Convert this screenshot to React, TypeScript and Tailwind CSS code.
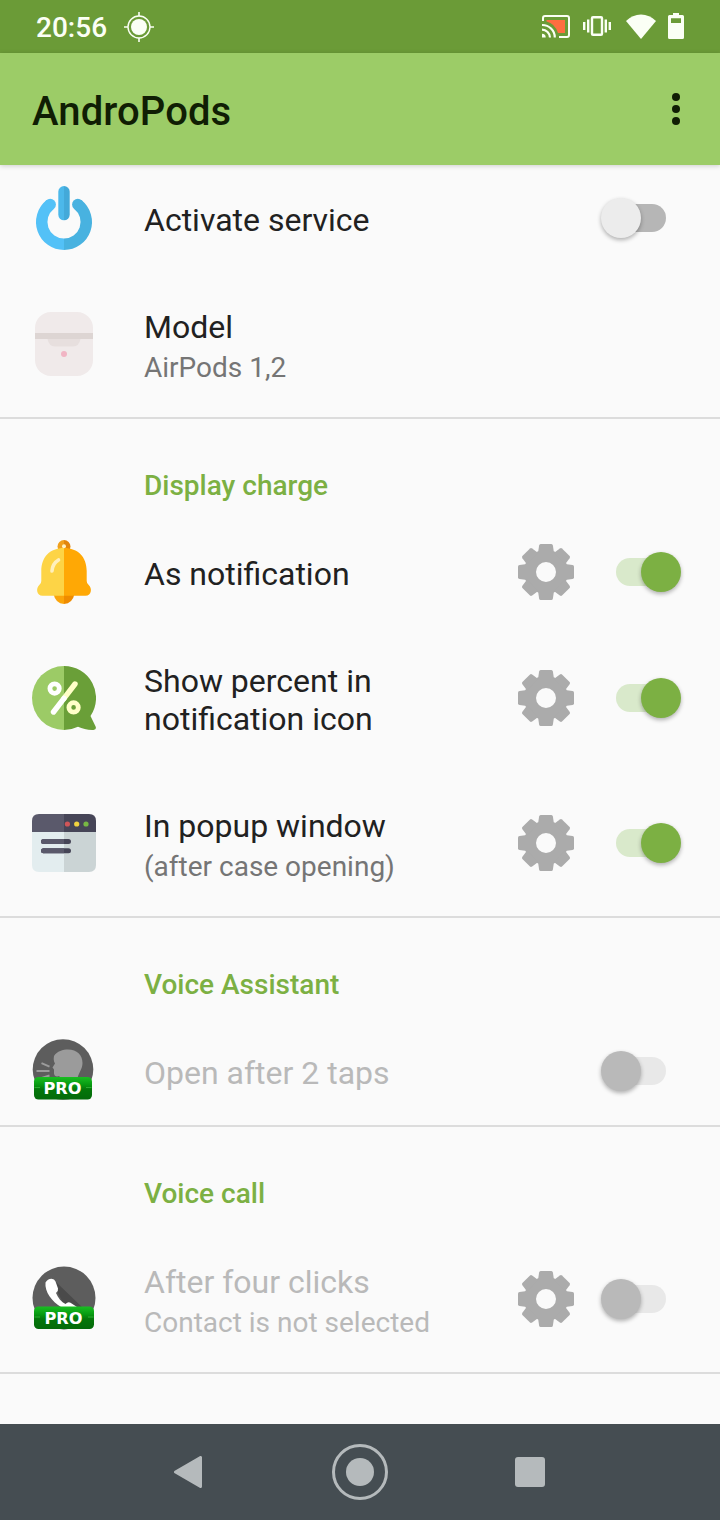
import type { ReactNode } from "react";

type SwitchState = "off" | "on" | "disabled";

interface RowProps {
  icon: ReactNode;
  title: string;
  subtitle?: string;
  state?: SwitchState;
  gear?: boolean;
  tall?: boolean;
}

function Toggle({ state }: { state: SwitchState }) {
  const track =
    state === "on" ? "bg-[#d9e9cb]" : state === "off" ? "bg-[#b6b6b6]" : "bg-[#e8e8e8]";
  const thumb =
    state === "on" ? "bg-[#7cb043]" : state === "off" ? "bg-[#ececec]" : "bg-[#b9b9b9]";
  return (
    <div className="relative flex h-10 w-20 shrink-0 items-center px-[15px]">
      <div className={`h-7 w-full rounded-full ${track}`} />
      <div
        className={`absolute top-0 size-10 rounded-full shadow-[0_2px_4px_rgba(0,0,0,0.3)] ${thumb} ${
          state === "on" ? "right-0" : "left-0"
        }`}
      />
    </div>
  );
}

function GearIcon() {
  return (
    <svg viewBox="0 0 56 56" className="size-14 shrink-0">
      <circle cx="28" cy="28" r="16" fill="none" stroke="#ababab" strokeWidth="12" />
      {[0, 45, 90, 135, 180, 225, 270, 315].map((a) => (
        <path
          key={a}
          d="M20 9L21.1 1.5Q21.4 0 22.6 0H33.4Q34.6 0 34.9 1.5L36 9Z"
          fill="#ababab"
          transform={`rotate(${a} 28 28)`}
        />
      ))}
    </svg>
  );
}

function Row({ icon, title, subtitle, state, gear, tall }: RowProps) {
  const disabled = state === "disabled";
  return (
    <div className={`flex items-center pr-[39px] pl-8 ${tall ? "h-[145px] pb-px" : "h-[108px]"}`}>
      <div className="size-16 shrink-0">{icon}</div>
      <div className="ml-12 min-w-0 flex-1 pt-1 whitespace-pre-line">
        <p
          className={`text-[32px] leading-[38px] ${disabled ? "text-[#b9b9b9]" : "text-[#212121]"}`}
        >
          {title}
        </p>
        {subtitle && (
          <p
            className={`pt-[5px] text-[28px] leading-[33px] whitespace-nowrap ${
              disabled ? "text-[#b9b9b9]" : "text-[#757575]"
            }`}
          >
            {subtitle}
          </p>
        )}
      </div>
      {gear && (
        <div className="mr-[27px]">
          <GearIcon />
        </div>
      )}
      {state && <Toggle state={state} />}
    </div>
  );
}

function SectionTitle({ children }: { children: ReactNode }) {
  return (
    <h2 className="flex h-[99px] items-center pt-[34px] pl-36 text-[28px] leading-[33px] font-medium text-[#7cb043]">
      {children}
    </h2>
  );
}

function Divider() {
  return <div className="h-0.5 bg-[#dcdcdc]" />;
}

function PowerIcon() {
  return (
    <svg viewBox="0 0 64 64" className="size-16">
      <path d="M18.2 18.5A22.3 22.3 0 0 0 32 58.3" fill="none" stroke="#53c1f7" strokeWidth="11.4" />
      <path d="M45.8 18.5A22.3 22.3 0 0 1 32 58.3" fill="none" stroke="#48b2e0" strokeWidth="11.4" />
      <circle cx="18.2" cy="18.5" r="5.7" fill="#53c1f7" />
      <circle cx="45.8" cy="18.5" r="5.7" fill="#48b2e0" />
      <path d="M32 0A5.7 5.7 0 0 0 26.3 5.7V28.6A5.7 5.7 0 0 0 32 34.3Z" fill="#4cb8ea" />
      <path d="M32 0A5.7 5.7 0 0 1 37.7 5.7V28.6A5.7 5.7 0 0 1 32 34.3Z" fill="#43a9d9" />
    </svg>
  );
}

function CaseIcon() {
  return (
    <svg viewBox="0 0 64 64" className="size-16">
      <rect x="3" width="58" height="64" rx="16" fill="#f0eaea" />
      <path d="M3 21H61V27H3Z" fill="#ddd5d3" />
      <path d="M15.5 27H48.5Q47 34.5 41 34.5H23Q17 34.5 15.5 27Z" fill="#e7dfde" />
      <circle cx="32" cy="42" r="3" fill="#f1b5c4" />
    </svg>
  );
}

function BellIcon() {
  return (
    <svg viewBox="0 0 64 64" className="size-16">
      <path d="M32 0A6.5 6.5 0 0 0 32 13Z" fill="#f0a01c" />
      <path d="M32 0A6.5 6.5 0 0 1 32 13Z" fill="#e2860d" />
      <path d="M21.500 54H32V64Q23.500 63.500 21.500 54Z" fill="#fba50a" />
      <path d="M32 54H42.500Q40.500 63.500 32 64Z" fill="#ef8c00" />
      <path
        d="M32 8C18 8 9.300 17 9.300 31V41Q9.300 43.300 7.500 44.700C3.500 48 4.500 55.800 10.500 55.800H32Z"
        fill="#fdd446"
      />
      <path
        d="M32 8C46 8 54.700 17 54.700 31V41Q54.700 43.300 56.500 44.700C60.500 48 59.500 55.800 53.500 55.800H32Z"
        fill="#ffa805"
      />
      <circle cx="32" cy="6.300" r="2" fill="#fff3c4" />
      <path
        d="M20 31Q20.500 23.500 26.500 20"
        fill="none"
        stroke="#fff0bd"
        strokeWidth="3.600"
        strokeLinecap="round"
      />
    </svg>
  );
}

function PercentIcon() {
  return (
    <svg viewBox="0 0 64 64" className="size-16">
      <path d="M32 0A32 32 0 0 0 32 64Z" fill="#9ccb66" />
      <path
        d="M32 0A32 32 0 0 1 58.500 50L63.600 60.500Q64.800 63.700 61.500 63.900Q53 64.200 46 60.800Q39.500 64 32 64Z"
        fill="#6a9f38"
      />
      <circle cx="22.600" cy="22.600" r="4.700" fill="none" stroke="#fff" strokeWidth="4.800" />
      <circle cx="41.600" cy="41.400" r="4.700" fill="none" stroke="#ffffc8" strokeWidth="4.800" />
      <path d="M43 18L32 32.300" stroke="#ffffc8" strokeWidth="5.400" strokeLinecap="round" />
      <path d="M32 32.300L21.500 46" stroke="#fff" strokeWidth="5.400" strokeLinecap="round" />
    </svg>
  );
}

function WindowIcon() {
  return (
    <svg viewBox="0 0 64 64" className="size-16">
      <path d="M0 21H32V61H7Q0 61 0 54Z" fill="#e3edef" />
      <path d="M32 21H64V54Q64 61 57 61H32Z" fill="#cbd4d5" />
      <path d="M0 21V10Q0 3 7 3H32V21Z" fill="#5a596b" />
      <path d="M32 3H57Q64 3 64 10V21H32Z" fill="#464557" />
      <circle cx="35.400" cy="13" r="2.600" fill="#cf5558" />
      <circle cx="44.700" cy="13" r="2.600" fill="#f2d43f" />
      <circle cx="54" cy="13" r="2.600" fill="#78b844" />
      <path
        d="M11.500 30.500H36.500M11.500 39.700H36.500"
        stroke="#464557"
        strokeWidth="5"
        strokeLinecap="round"
      />
      <path d="M11.500 30.500H32M11.500 39.700H32" stroke="#5a596b" strokeWidth="5" />
      <circle cx="11.500" cy="30.500" r="2.500" fill="#5a596b" />
      <circle cx="11.500" cy="39.700" r="2.500" fill="#5a596b" />
    </svg>
  );
}

function ProBadge({ width, y }: { width: number; y: number }) {
  return (
    <g transform={`translate(2 ${y})`}>
      <defs>
        <linearGradient id="pro" x1="0" y1="0" x2="0" y2="1">
          <stop offset="0" stopColor="#19bd22" />
          <stop offset="0.35" stopColor="#079a11" />
          <stop offset="0.55" stopColor="#04770a" />
          <stop offset="1" stopColor="#046a0a" />
        </linearGradient>
      </defs>
      <rect width={width} height="22.5" rx="4.500" fill="url(#pro)" />
      <path
        d={`M0.5 10.5H6M${width - 6} 10.5H${width - 0.5}`}
        stroke="#35b53c"
        strokeWidth="0.800"
      />
      <text
        x={width / 2 - 0.5}
        y="17.2"
        textAnchor="middle"
        textLength="38"
        lengthAdjust="spacingAndGlyphs"
        fill="#fff"
        className="font-['DejaVu_Sans',sans-serif] text-[16px] font-bold"
      >
        PRO
      </text>
    </g>
  );
}

function VoiceIcon() {
  return (
    <svg viewBox="0 0 64 64" className="size-16">
      <circle cx="31" cy="30.500" r="30.300" fill="#5d5d5d" />
      <path
        d="M22 17C25 12 31 10.500 36 10.500C45 10.500 50.500 16 50.500 24C50.500 30 47 33 45.500 39H27.500V37Q22.500 38.500 22 34.500V30.500L20.500 28.500L23 24.500C21.500 22 21.500 19.500 22 17Z"
        fill="#9b9b9b"
      />
      <path
        d="M9.500 24.200L17.500 27.600M4.500 32H17.500M9 39.300L17.500 36.500"
        stroke="#9b9b9b"
        strokeWidth="2"
      />
      <ProBadge width={58} y={38} />
    </svg>
  );
}

function CallIcon() {
  return (
    <svg viewBox="0 0 64 64" className="size-16 overflow-visible">
      <circle cx="32" cy="31" r="31.500" fill="#5d5d5d" />
      <path d="M24 15L52 42H34L26 26Z" fill="#4a4a4a" />
      <path
        d="M13.500 15.500Q15.500 12 19.500 11.800Q22.500 11.800 23.500 14.500L26 21.500Q26.500 24 24 26C26 31 29.500 35 33.500 37Q36 34.500 38.500 35.800L45 40H29C20 34.500 12.500 25 13.500 15.500Z"
        fill="#fff"
      />
      <ProBadge width={60} y={39.5} />
    </svg>
  );
}

function StatusBar() {
  return (
    <div className="flex h-[53px] items-center bg-[#6b9b37] px-9 text-[#fbfff5]">
      <span className="w-[71px] pt-0.5 text-[28px] leading-none font-medium whitespace-nowrap">
        20:56
      </span>
      <svg viewBox="0 0 30 30" className="ml-[17px] size-[30px]">
        <circle cx="15" cy="15" r="8" fill="currentColor" />
        <circle cx="15" cy="15" r="11" fill="none" stroke="currentColor" strokeWidth="1.400" />
        <path d="M15 0V4M15 26V30M0 15H4M26 15H30" stroke="currentColor" strokeWidth="1.600" />
      </svg>
      <div className="ml-auto flex items-center pb-px">
        <svg viewBox="0 0 28 23" className="h-[23px] w-7">
          <path d="M4.500 5H23V18H16Q13 8.500 4.500 6.500Z" fill="#ff6e40" />
          <path
            d="M1 6V3Q1 1 3 1H25Q27 1 27 3V20Q27 22 25 22H17"
            fill="none"
            stroke="currentColor"
            strokeWidth="2"
          />
          <path
            d="M0 10A12.500 12.500 0 0 1 12.800 22.500M0 14.700A8 8 0 0 1 8 22.500"
            fill="none"
            stroke="currentColor"
            strokeWidth="2.200"
          />
          <path d="M0 18.800A3.700 3.700 0 0 1 3.700 22.500H0Z" fill="currentColor" />
        </svg>
        <svg viewBox="0 0 28 20" className="ml-[13px] h-5 w-7">
          <rect
            x="9"
            y="1.200"
            width="10"
            height="17.600"
            rx="1"
            fill="none"
            stroke="currentColor"
            strokeWidth="2.400"
          />
          <path
            d="M1.200 6V14M5.200 3.500V16.500M22.800 3.500V16.500M26.800 6V14"
            stroke="currentColor"
            strokeWidth="2.400"
          />
        </svg>
        <svg viewBox="0 0 30 25" className="ml-[15px] h-[25px] w-[30px]">
          <path d="M0 7Q6.500 0.500 15 0.500T30 7L15 25Z" fill="currentColor" />
        </svg>
        <svg viewBox="0 0 16 26" className="ml-3 h-[26px] w-4">
          <path
            d="M5 0H11V2H14.500Q16 2 16 3.500V24.500Q16 26 14.500 26H1.500Q0 26 0 24.500V3.500Q0 2 1.500 2H5ZM3 5.200V10H13V5.200Z"
            fill="currentColor"
            fillRule="evenodd"
          />
        </svg>
      </div>
    </div>
  );
}

function NavBar() {
  return (
    <nav className="mt-auto flex h-24 justify-center bg-[#454d52]">
      <div className="flex w-[170px] items-center justify-center">
        <svg viewBox="0 0 32 32" className="size-8">
          <path
            d="M3.500 16L28.500 1.500V30.500Z"
            fill="#b5babc"
            stroke="#b5babc"
            strokeWidth="3"
            strokeLinejoin="round"
            transform="translate(-2 0)"
          />
        </svg>
      </div>
      <div className="flex w-[170px] items-center justify-center">
        <div className="flex size-14 items-center justify-center rounded-full border-[3px] border-[#b5babc]">
          <div className="size-7 rounded-full bg-[#b5babc]" />
        </div>
      </div>
      <div className="flex w-[170px] items-center justify-center">
        <div className="size-[30px] rounded-[3px] bg-[#b5babc]" />
      </div>
    </nav>
  );
}

export default function App() {
  return (
    <div className="flex h-[1520px] w-[720px] flex-col overflow-hidden bg-[#fafafa] font-[Roboto,sans-serif]">
      <StatusBar />
      <header className="z-10 flex h-28 items-center justify-between bg-[#9ccc67] pr-10 pl-8 shadow-[0_1px_5px_rgba(0,0,0,0.18)]">
        <h1 className="pt-1 text-[40px] leading-[47px] font-medium tracking-[0.1px] text-[#101e04]">
          AndroPods
        </h1>
        <div className="flex flex-col gap-1">
          <div className="size-2 rounded-full bg-[#101e04]" />
          <div className="size-2 rounded-full bg-[#101e04]" />
          <div className="size-2 rounded-full bg-[#101e04]" />
        </div>
      </header>
      <main className="-mt-px">
        <Row icon={<PowerIcon />} title="Activate service" state="off" />
        <Row icon={<CaseIcon />} title="Model" subtitle="AirPods 1,2" tall />
        <Divider />
        <SectionTitle>Display charge</SectionTitle>
        <Row icon={<BellIcon />} title="As notification" state="on" gear />
        <Row
          icon={<PercentIcon />}
          title={"Show percent in\nnotification icon"}
          state="on"
          gear
          tall
        />
        <Row
          icon={<WindowIcon />}
          title="In popup window"
          subtitle="(after case opening)"
          state="on"
          gear
          tall
        />
        <Divider />
        <SectionTitle>Voice Assistant</SectionTitle>
        <Row icon={<VoiceIcon />} title="Open after 2 taps" state="disabled" />
        <Divider />
        <SectionTitle>Voice call</SectionTitle>
        <div className="pt-px">
          <Row
            icon={<CallIcon />}
            title="After four clicks"
            subtitle="Contact is not selected"
            state="disabled"
            gear
            tall
          />
        </div>
        <Divider />
      </main>
      <NavBar />
    </div>
  );
}
